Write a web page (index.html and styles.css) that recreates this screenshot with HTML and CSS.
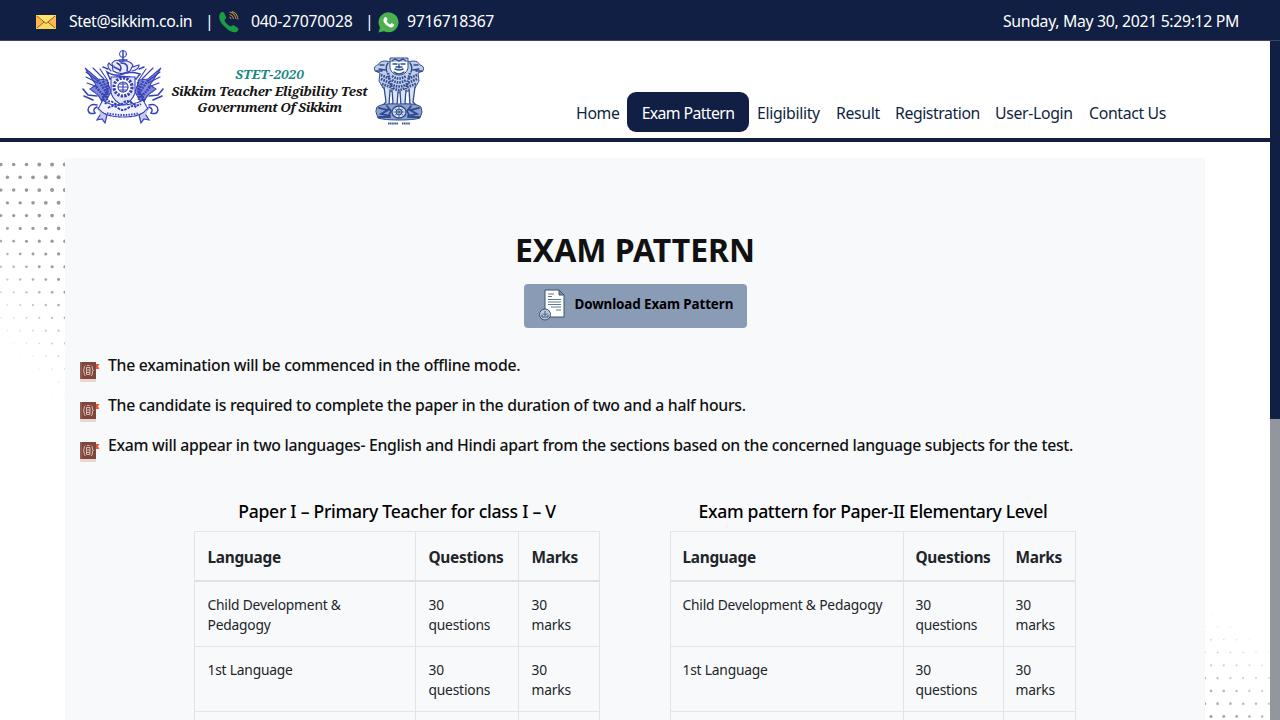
FILE: index.html
```html
<!DOCTYPE html>
<html lang="en">
<head>
<meta charset="utf-8">
<title>STET-2020 Exam Pattern</title>
<link rel="stylesheet" href="styles.css">
</head>
<body>
<div class="topbar">
  <svg class="ic-mail" viewBox="0 0 20 14"><rect width="20" height="14" fill="#ffb74f"/><path d="M0 0h20L10 9z" fill="#ffe36b"/><path d="M0 14L8 6.500 10 8l2-1.500L20 14z" fill="#ffd95c"/><path d="M1 1l9 7.500L19 1M1 13l7-6M19 13l-7-6" fill="none" stroke="#7b5730" stroke-width=".9"/></svg>
  <span class="t-mail">Stet@sikkim.co.in</span>
  <span class="t-sep">|</span>
  <svg class="ic-phone" viewBox="0 0 22 22"><path d="M2 2.500Q4 .2 6 1.500L8 6q.5 1.500-1.700 3 1.500 4 6.500 6.500 1.700-1.700 3.200-1l4 2.500q1.200 2-1.500 4-5 1.500-11-4.500Q-1 9 2 2.500z" fill="#1c9b45"/><path d="M13 8q-.3-1.500-1.500-2M15.500 8q-.5-3.700-4-4.500M18 8Q17 2 11.500 1M20 8.500Q19.500 2 14 .5" fill="none" stroke="#b08a3e" stroke-width="1.100"/></svg>
  <span class="t-phone">040-27070028</span>
  <span class="t-sep">|</span>
  <svg class="ic-wa" viewBox="0 0 21 21"><path d="M.5 20.500L2 15.500a10 10 0 1 1 4 3.700z" fill="#4caf50"/><path d="M6.500 5.500q1.500-1.300 2.300.2l.7 1.800q0 .7-1 1.600 1.300 2.500 3.700 3.500l1.200-1.300q.6-.3 2.500 1 .7.500 0 1.700-1.500 2-4 1.200-4-1.200-6-5Q4.800 7.500 6.500 5.500z" fill="#fff"/></svg>
  <span class="t-wa">9716718367</span>
  <span class="t-date">Sunday, May 30, 2021 5:29:12 PM</span>
</div>
<div class="view">
  <div class="page">
    <header class="header">
      <div class="brand">
        <svg class="sikkim" viewBox="0 0 84 78" fill="none" stroke="#3540b4" stroke-width="1.100" stroke-linecap="round">
          <circle cx="42" cy="5" r="3.500" stroke-width="1"/><path d="M42 2v10M38 11h8" stroke-width="1.500"/>
          <path d="M31 14q4-5 9-1 7-3 12 3l-3 6q-9 5-17 0zM30 22q-5-5-2-8 2 3 5 3M51 22q7-1 7-6-4 1-6 2" fill="#e9ebfa"/>
          <path d="M36 14q6 3 3 8M40 14q8 0 6 8M33 18l6 3" stroke-width="1.500"/>
          <path d="M26 23q8 5 16 2t17 0l-4 5q-13-5-26 0zM22 18l5 2M58 20l5-2" stroke-width="1.500" fill="#fff" stroke-dasharray="2.500 .8"/>
          <path d="M4 19l13 11 9 1 4 12-7 12-6-9-8-6 6-4zM80 19L67 30l-9 1-4 12 7 12 6-9 8-6-6-4z" fill="#7f89d6" stroke-dasharray="3 1"/>
          <path d="M5 23l12 9M5 28l12 6M6 34l11 4M12 19l11 11M19 20l8 12M79 23l-12 9M79 28l-12 6M78 34l-11 4M72 19L61 30M65 20l-8 12"/>
          <path d="M2 40l5 6 9 1M3 47l9 4M82 40l-5 6-9 1M81 47l-9 4" stroke-width="1.600"/>
          <path d="M17 31l8 12-5 9M22 32l5 10-6 11M15 38l8 9M27 33l-1 18M67 31l-8 12 5 9M62 32l-5 10 6 11M69 38l-8 9M57 33l1 18" stroke-width="2.400" stroke-dasharray="1.800 1" stroke-linecap="butt"/>
          <path d="M30 28h24v16q-3 9-12 12-9-3-12-12z" fill="#e4e7fa"/>
          <circle cx="42" cy="38" r="9" fill="#fff" stroke-width="3.200" stroke-dasharray="2.300 1.200" stroke-linecap="butt"/><circle cx="42" cy="38" r="5"/><path d="M37 38h10M42 33v10M39 35h6M39 41h6"/>
          <path d="M22 51q6 6 20 5t20-5l5 9q-7 8-25 8t-25-8z" fill="#f1f2fc" stroke-dasharray="4 1"/>
          <path d="M24 55q4-5 9-1t9 0 9 0 9 1M27 59q5-4 10 0t10 0 9 0" stroke-width="2" stroke-dasharray="2.500 1" stroke-linecap="butt"/>
          <path d="M26 64q16 4 32 0" stroke-width="1.800" stroke-dasharray="1.500 1.200" stroke-linecap="butt"/>
          <path d="M16 56q-8-2-9 5 1 5 7 3-3-4 2-6M68 56q8-2 9 5-1 5-7 3 3-4-2-6" fill="#fff" stroke-width="1.400"/>
          <path d="M17 59q4 5 9 7l-2 8-3-4-5 1 3-5M67 59q-4 5-9 7l2 8 3-4 5 1-3-5" fill="#c5cbf0" stroke-width="1.200"/>
        </svg>
        <div class="brand-text">
          <div class="b1">STET-2020</div>
          <div class="b2">Sikkim Teacher Eligibility Test</div>
          <div class="b3">Government Of Sikkim</div>
        </div>
        <svg class="lion" viewBox="0 0 50 68" fill="none" stroke="#2d4b90" stroke-width="1" stroke-linecap="round">
          <path d="M16 1h18v10q-2 7-9 7t-9-7zM16 5q-9-3-12 3-5 1-3 6l5 2-1 8 4 7 7 3 9 2 9-2 7-3 4-7-1-8 5-2q2-5-3-6-3-6-12-3" fill="#c3cde6" stroke-dasharray="3 .8"/>
          <path d="M18 4l3-2 4 2 4-2 3 2M19 7h4M27 7h4M25 7v4M21 12q4 2 8 0M20 15q5 4 10 0M22 10h6" stroke-width="1.400"/>
          <path d="M6 8h4M5 12l6 1M2 14h6M44 8h-4M45 12l-6 1M48 14h-6M14 6q-3 4-1 9M36 6q3 4 1 9" stroke-width="1.400"/>
          <path d="M7 18l9 4M7 22l9 4M8 27l9 3M14 16l4 16M18 19q7 5 14 0M18 23q7 5 14 0M17 27q8 5 16 0M19 31q6 4 12 0M43 18l-9 4M43 22l-9 4M42 27l-9 3M36 16l-4 16" stroke-width="2.600" stroke-dasharray="1.600 1" stroke-linecap="butt"/>
          <path d="M10 30l2 15-3 3h6l1-15M18 33l1 13-3 3h7l1-14M26 34l1 15h7l-3-3 1-13M35 32l1 16h6l-3-3 2-15" fill="#dbe2f1" stroke-width="1.300"/>
          <path d="M3 50q4-4 22-3 18-1 22 3l1 5-2 6q-6 2-21 2T4 61l-2-6z" fill="#8fa1cc"/>
          <ellipse cx="25" cy="55" rx="7" ry="6" fill="#d8dfef" stroke-width="1.300"/><circle cx="25" cy="55" r="3"/><path d="M20 55h10M25 50v10M21 52l8 6M29 52l-8 6" stroke-width=".7"/>
          <path d="M5 51l9 2-7 4 9 2M45 51l-9 2 7 4-9 2M13 49l4 5-3 6M37 49l-4 5 3 6M5 60h11M34 60h11" stroke-width="1.800" stroke-dasharray="3 1"/>
          <path d="M14 66.500h10M28 66.500h8" stroke-width="2" stroke-dasharray="1.500 .6" stroke-linecap="butt"/>
        </svg>
      </div>
      <nav class="nav">
        <a class="n1">Home</a><a class="n2 active">Exam Pattern</a><a class="n3">Eligibility</a><a class="n4">Result</a><a class="n5">Registration</a><a class="n6">User-Login</a><a class="n7">Contact Us</a>
      </nav>
    </header>
    <div class="body">
      <svg class="dots" id="dots" viewBox="0 142 1270 578"></svg>
      <main class="card">
        <h1>EXAM PATTERN</h1>
        <a class="download">
          <svg viewBox="0 0 28 32"><path d="M7 1h14l5 5v22H7z" fill="#fff" stroke="#38536e" stroke-width="1"/><path d="M21 1v5h5z" fill="#7b93b0" stroke="#38536e"/><path d="M10 5h6M10 7.500h4M10 10.500h13M10 13h13M10 15.500h13M13 18h10M18 21h5" stroke="#5f7b93" stroke-width="1.100"/><circle cx="7" cy="25.500" r="5.500" fill="#b9c8da" stroke="#38536e"/><path d="M7 22v4M5 24.500l2 2 2-2M4 25.500v2.500h6v-2.500" fill="none" stroke="#38536e"/></svg>
          <span>Download Exam Pattern</span>
        </a>
        <ul class="rules">
          <li><svg viewBox="0 0 20 22"><use href="#book"/></svg><span class="r1">The examination will be commenced in the offline mode.</span></li>
          <li><svg viewBox="0 0 20 22"><use href="#book"/></svg><span class="r2">The candidate is required to complete the paper in the duration of two and a half hours.</span></li>
          <li><svg viewBox="0 0 20 22"><use href="#book"/></svg><span class="r3">Exam will appear in two languages- English and Hindi apart from the sections based on the concerned language subjects for the test.</span></li>
        </ul>
        <div class="tables">
          <section>
            <h2 class="c1">Paper I – Primary Teacher for class I – V</h2>
            <table>
              <colgroup><col class="w221"><col class="w103"><col class="w81"></colgroup>
              <thead><tr><th>Language</th><th>Questions</th><th>Marks</th></tr></thead>
              <tbody>
                <tr><td>Child Development &amp;<br>Pedagogy</td><td>30<br>questions</td><td>30<br>marks</td></tr>
                <tr><td>1st Language</td><td>30<br>questions</td><td>30<br>marks</td></tr>
                <tr><td></td><td></td><td></td></tr>
              </tbody>
            </table>
          </section>
          <section>
            <h2 class="c2">Exam pattern for Paper-II Elementary Level</h2>
            <table class="second">
              <colgroup><col class="w233"><col class="w100"><col class="w72"></colgroup>
              <thead><tr><th>Language</th><th>Questions</th><th>Marks</th></tr></thead>
              <tbody>
                <tr><td>Child Development &amp; Pedagogy</td><td>30<br>questions</td><td>30<br>marks</td></tr>
                <tr><td>1st Language</td><td>30<br>questions</td><td>30<br>marks</td></tr>
                <tr><td></td><td></td><td></td></tr>
              </tbody>
            </table>
          </section>
        </div>
      </main>
    </div>
  </div>
  <div class="scroll"><div class="thumb"></div></div>
</div>
<svg class="defs"><defs><g id="book"><path d="M0 1h16v17H0z" fill="#7d473f"/><path d="M0 1h2v17H0z" fill="#95594e"/><path d="M0 18h16v3H0z" fill="#ead5d1"/><path d="M16 3h3.500l-1.500 2.500L19.500 8H16z" fill="#f0542c"/><path d="M5.500 4.500Q4 5 4 8q0 1.500-1 1.500 1 0 1 1.500 0 3.500 1.500 4M11 4.500q1.500.5 1.500 3.500 0 1.500 1 1.500-1 0-1 1.500 0 3.500-1.500 4M6.500 6.500h3.500v7H6.500zM6.500 9h3.500M6.500 11.500h3.500M7 4.500h2.500" fill="none" stroke="#e3c8c2" stroke-width=".9"/></g></defs></svg>
<script src="dots.js"></script>
</body>
</html>
```
FILE: styles.css
```css
* { box-sizing: border-box; }
body { margin: 0; width: 1280px; height: 720px; overflow: hidden; background: #fff; font-family: "Noto Sans", "Open Sans", sans-serif; font-size: 15.8px; letter-spacing: -0.33px; color: #212529; display: flex; flex-direction: column; }
.defs { width: 0; height: 0; position: absolute; }
.topbar { height: 41px; flex: none; background: #101f43; border-bottom: 1px solid #3d4763; color: #fff; display: flex; align-items: center; padding: 3px 41px 0 36px; white-space: nowrap; }
.topbar svg { flex: none; margin-top: 1px; }
.topbar span { margin-top: -2px; }
.ic-mail { width: 20px; height: 14px; margin-right: 13px; }
.t-mail { width: 136px; letter-spacing: -0.4px; }
.t-sep { width: 13px; }
.ic-phone { width: 22px; height: 22px; margin-right: 11px; }
.t-phone { width: 114px; letter-spacing: -0.25px; }
.ic-wa { width: 21px; height: 21px; margin-right: 8px; }
.t-date { margin-left: auto; }
.view { flex: 1; display: flex; min-height: 0; }
.page { width: 1270px; display: flex; flex-direction: column; }
.scroll { width: 10px; background: #92979e; }
.thumb { height: 378px; background: #101f43; }
.header { height: 101px; flex: none; border-bottom: 4px solid #101f43; display: flex; justify-content: space-between; padding: 8px 96px 0 81px; }
.brand { display: flex; }
.sikkim { width: 84px; height: 78px; }
.brand-text { width: 209px; padding-top: 17px; text-align: center; font: italic bold 13.4px/16.5px "Noto Serif", "DejaVu Serif", "Liberation Serif", serif; letter-spacing: -0.32px; color: #151515; white-space: nowrap; }
.b1 { color: #16877f; letter-spacing: 0.1px; }
.b3 { letter-spacing: -0.5px; }
.lion { width: 50px; height: 68px; margin-top: 8px; }
.nav { display: flex; padding-top: 43px; white-space: nowrap; }
.nav a { height: 40px; line-height: 43px; color: #101f43; }
.n1 { width: 51px; }
.nav .active { width: 122px; margin-right: 8px; text-align: center; color: #fff; background: #101f43; border-radius: 9px; }
.nav .n2 { letter-spacing: -0.6px; }
.n3 { width: 79px; }
.n4 { width: 59px; }
.n5 { width: 100px; }
.nav .n5 { letter-spacing: -0.42px; }
.n6 { width: 94px; }
.n7 { width: 85px; }
.body { flex: 1; position: relative; padding: 16px 65px 0; overflow: hidden; }
.dots { position: absolute; left: 0; top: 0; width: 1270px; height: 578px; }
.card { position: relative; width: 1140px; height: 640px; background: #f8f9fb; padding: 68px 15px 0; display: flex; flex-direction: column; align-items: center; }
h1 { margin: 0; height: 58px; font-size: 32px; line-height: 48px; font-weight: 700; letter-spacing: -0.05px; color: #111; white-space: nowrap; }
.download { width: 223px; height: 44px; background: #8a9bb6; border-radius: 4px; display: flex; color: #000; font-weight: 700; font-size: 13.4px; letter-spacing: -0.1px; white-space: nowrap; padding: 5px 0 0 14px; }
.download svg { width: 28px; height: 32px; margin-right: 9px; }
.download span { line-height: 31px; }
.rules { list-style: none; margin: 17px 0 0; padding: 0; align-self: stretch; }
.rules li { height: 40px; display: flex; white-space: nowrap; font-weight: 500; letter-spacing: -0.29px; color: #111; line-height: 40px; }
.rules svg { width: 20px; height: 22px; margin: 16px 8px 0 0; }
.tables { display: flex; gap: 70px; margin-top: 28px; }
h2 { margin: 0; height: 38px; line-height: 36px; font-size: 17.6px; letter-spacing: -0.34px; font-weight: 500; color: #000; text-align: center; white-space: nowrap; }
.c1 { letter-spacing: -0.27px; }
table { width: 405px; table-layout: fixed; border-collapse: collapse; line-height: 20px; font-size: 13.8px; letter-spacing: -0.2px; }
.w221 { width: 221px; } .w103 { width: 103px; } .w81 { width: 81px; }
.w233 { width: 233px; } .w100 { width: 100px; } .w72 { width: 72px; }
th, td { border: 1px solid #e1e4e8; text-align: left; vertical-align: top; padding: 13px 0 11px 12.5px; }
th { font-size: 15.4px; letter-spacing: -0.3px; line-height: 24px; border-bottom: 2px solid #dee2e6; white-space: nowrap; padding-top: 14px; padding-bottom: 10px; }
.second th, .second td { padding-left: 11.5px; }
```
FILE: dots.js
```js
// Halftone corners: staggered rows of dots that shrink away from the corner.
const svg = document.getElementById("dots");
function dot(x, y, r, o) {
  if (r < 0.3) return;
  const c = document.createElementNS("http://www.w3.org/2000/svg", "circle");
  c.setAttribute("cx", x); c.setAttribute("cy", y); c.setAttribute("r", r);
  c.setAttribute("fill", "#999"); c.setAttribute("opacity", o);
  svg.appendChild(c);
}
for (let row = 0; row < 19; row++) {
  for (let i = 0; i < 6; i++) {
    const x = (row % 2 ? 7.4 : 0.9) + i * 12.8, y = 164.5 + row * 12.78;
    const k = 1 - Math.max(0, row - 2) / 18 - (65 - x) / 65 * 0.3;
    if (k > 0) dot(x, y, 0.6 + 1.5 * k, Math.min(1, k * 1.7));
  }
}
for (let row = 0; row < 9; row++) {
  for (let i = 0; i < 6; i++) {
    const x = (row % 2 ? 1204.8 : 1211) + i * 12.8, y = 716.5 - row * 12.8;
    const k = 0.8 - row * 0.08 - (x - 1205) / 65 * 0.25;
    if (k > 0) dot(x, y, 0.6 + 1.2 * k, Math.min(1, k * 1.2));
  }
}
```
